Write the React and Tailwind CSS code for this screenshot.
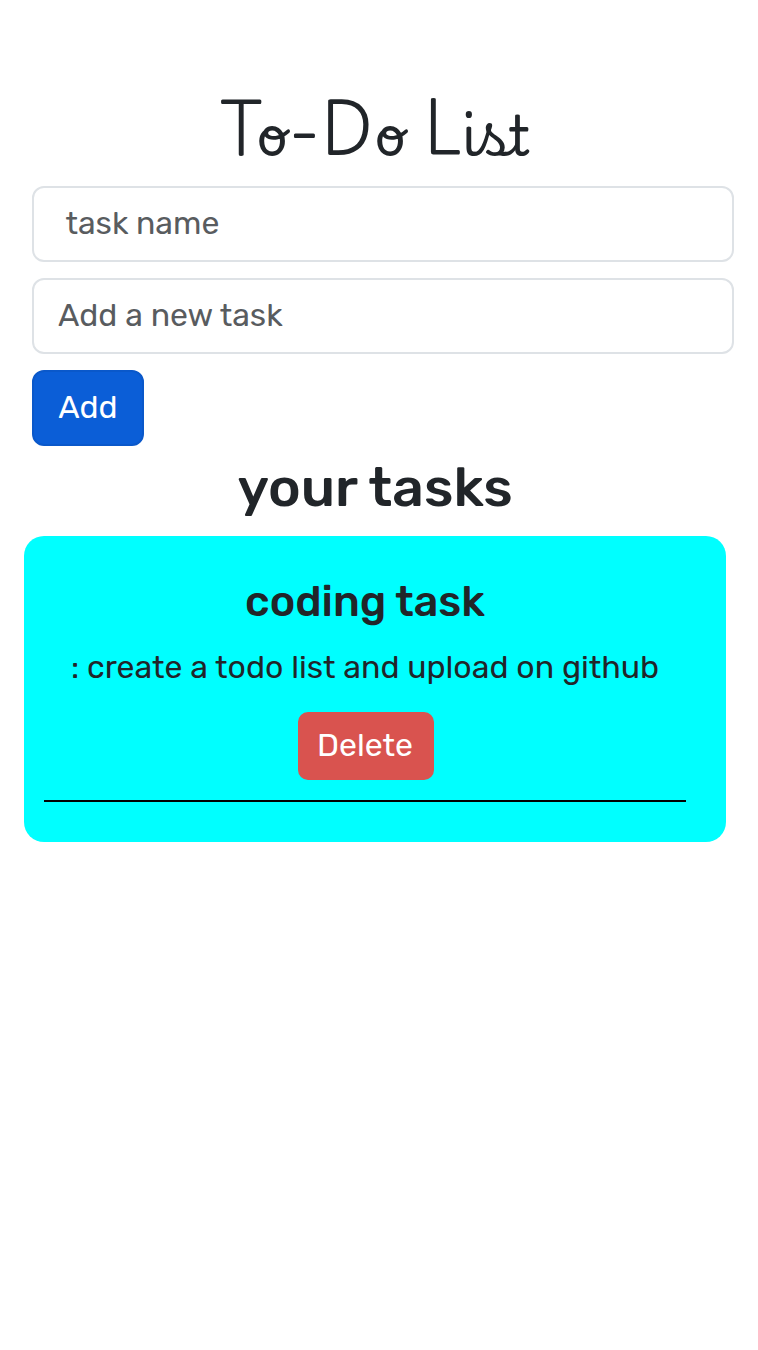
export default function App() {
  return (
    <main className="flex min-h-[1350px] w-[758px] flex-col bg-white pt-[88px] font-['Rubik','Roboto',sans-serif] text-[#212529]">
      <h1 className="flex h-[82px] items-center justify-center pt-px pr-2 font-['Playwrite_ES','Lato',cursive] text-[55.37px] leading-none font-normal">
        <span>To-Do List</span>
      </h1>
      <form className="mt-4 flex flex-col items-start gap-4 pr-6 pl-8 text-[32px] leading-[48px]" onSubmit={(e) => e.preventDefault()}>
        <input aria-label="task name" placeholder="task name" className="h-[76px] w-full rounded-xl border-2 border-[#dee2e6] pb-0.5 pl-[31.4px] placeholder:text-[#595c5f] placeholder:opacity-100" />
        <input aria-label="Add a new task" placeholder="Add a new task" className="h-[76px] w-full rounded-xl border-2 border-[#dee2e6] pb-0.5 pl-6 placeholder:text-[#595c5f] placeholder:opacity-100" />
        <button className="flex h-[76px] w-28 items-center justify-center rounded-xl border-2 border-[#0a58ca] bg-[#0b5ed7] pb-0.5 text-white">
          <span>Add</span>
        </button>
      </form>
      <h2 className="mt-[10px] mb-4 flex h-16 items-center justify-center pr-2 text-[55.37px] font-medium">
        <span>your tasks</span>
      </h2>
      <section className="mr-8 ml-6 flex h-[306px] flex-col rounded-[20px] bg-[#00ffff] pt-10 pr-10 pl-5">
        <h3 className="flex h-[52px] items-center justify-center text-[43.07px] font-medium">
          <span>coding task</span>
        </h3>
        <p className="mt-4 flex h-12 items-center justify-center pb-0.5 text-[32px] whitespace-nowrap">
          <span>: create a todo list and upload on github</span>
        </p>
        <button className="mt-5 ml-[254px] flex h-[68px] w-[136px] shrink-0 items-center justify-center rounded-[10px] bg-[#d9534f] pr-0.5 pb-0.5 text-[32px] text-white">
          <span>Delete</span>
        </button>
        <div className="mt-5 h-0.5 shrink-0 bg-black" />
      </section>
    </main>
  );
}
